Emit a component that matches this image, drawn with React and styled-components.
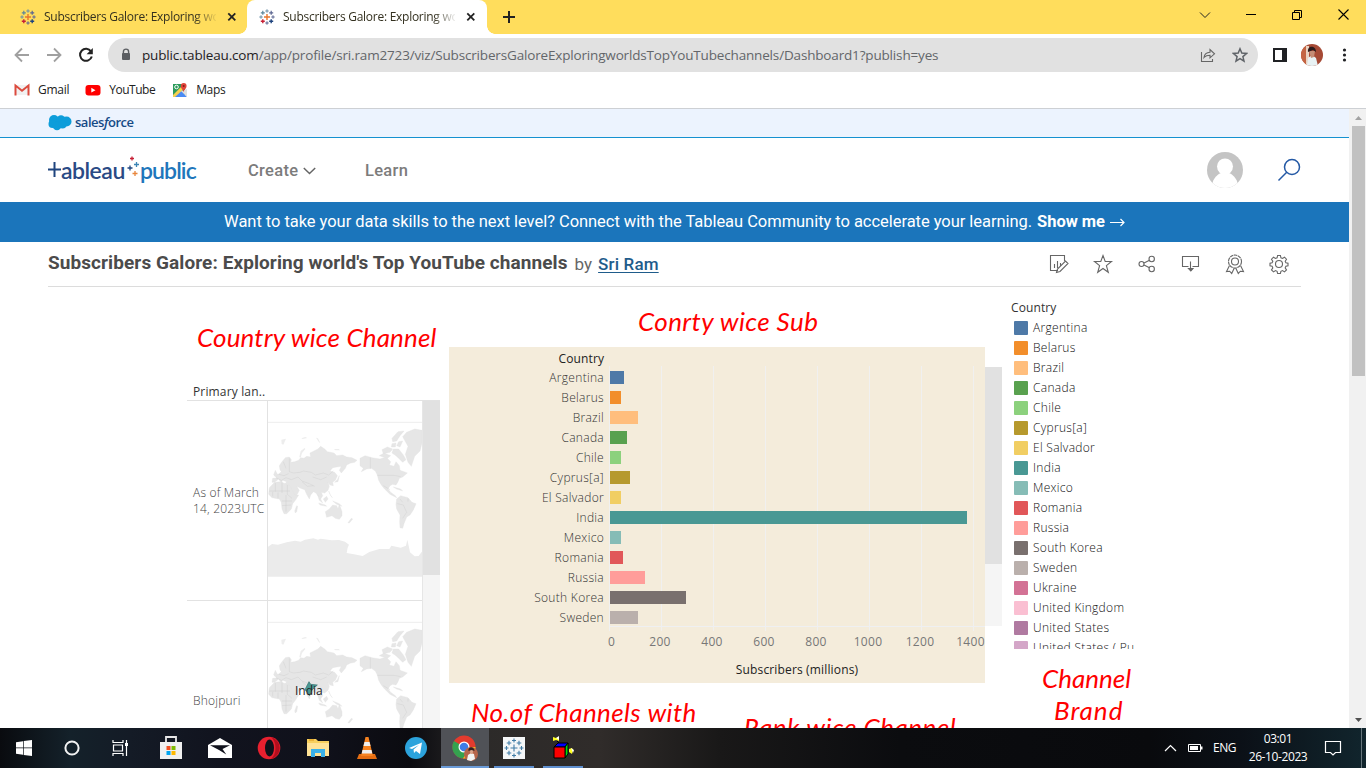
import React from "react";
import styled, { createGlobalStyle } from "styled-components";

const Global = createGlobalStyle`
  * { box-sizing: border-box; }
  body { margin: 0; background: #fff; overflow: hidden; font-family: "Open Sans", "Noto Sans", sans-serif; }
  svg { display: block; flex: none; }
`;

const ui = `"Open Sans", "Noto Sans", sans-serif`;
const site = `Roboto, "Liberation Sans", sans-serif`;
const hand = `Lato, "Open Sans", cursive`;

const Screen = styled.div`
  width: 1366px; height: 768px; display: flex; flex-direction: column; overflow: hidden; background: #fff;
`;

/* Browser frame */
const TabStrip = styled.div`
  height: 34px; background: #ffdd5c; display: flex; align-items: stretch; flex: none;
`;
const Tab = styled.div`
  width: ${p => p.$w}px; padding-left: ${p => p.$pad}px; display: flex; align-items: center; position: relative;
  background: ${p => (p.$active ? "#fff" : "transparent")};
  border-radius: 8px 8px 0 0;
  ${p => p.$active && `
    &::before, &::after { content: ""; position: absolute; bottom: 0; width: 8px; height: 8px; }
    &::before { left: -8px; background: radial-gradient(circle at 0 0, transparent 7.5px, #fff 8px); }
    &::after { right: -8px; background: radial-gradient(circle at 100% 0, transparent 7.5px, #fff 8px); }
  `}
`;
const TabTitle = styled.div`
  margin-left: 8px; width: 172px; font: 400 12px/18px ${ui}; letter-spacing: -0.27px; color: #33301f; white-space: nowrap; overflow: hidden;
  mask-image: linear-gradient(90deg, #000 150px, transparent 174px);
`;
const CloseMark = styled.div`
  margin-left: 11px; display: flex;
`;
const NewTab = styled.div`
  margin-left: 16px; display: flex; align-items: center;
`;
const WindowButtons = styled.div`
  margin-left: auto; display: flex; align-items: center; padding-bottom: 5px;
`;
const WinButton = styled.div`
  width: 46px; display: flex; justify-content: center;
`;
const Toolbar = styled.div`
  height: 42px; display: flex; align-items: center; padding: 0 12px 0 14px; flex: none;
`;
const NavIcons = styled.div`
  display: flex; gap: 16px; width: 94px; align-items: center; flex: none;
`;
const Address = styled.div`
  width: 1150px; flex: none; height: 34px; border-radius: 17px; background: #e1e1e1; display: flex; align-items: center; padding: 0 10px 0 12px;
`;
const Url = styled.div`
  margin-left: 10px; font: 400 13.5px/20px ${ui}; letter-spacing: -0.165px; color: #63666a; white-space: nowrap;
  b { font-weight: 400; color: #1f2023; }
`;
const AddressIcons = styled.div`
  margin-left: auto; display: flex; gap: 16px; align-items: center;
`;
const ToolbarEnd = styled.div`
  display: flex; align-items: center; margin-left: 15px; gap: 14px;
`;
const Bookmarks = styled.div`
  height: 33px; border-bottom: 1px solid #cdd0d4; display: flex; align-items: flex-start; padding: 5px 0 0 14px; flex: none;
`;
const Bookmark = styled.div`
  display: flex; align-items: center; gap: 8px; margin-right: ${p => p.$gap}px;
  font: 400 12px/18px ${ui}; letter-spacing: ${p => p.$ls}px; color: #222;
`;

/* Page */
const Viewport = styled.div`
  flex: 1; display: flex; min-height: 0;
`;
const Page = styled.main`
  width: 1349px; height: 619px; overflow: hidden; display: flex; flex-direction: column;
`;
const PageScroll = styled.div`
  width: 17px; background: #f1f1f1; display: flex; flex-direction: column; align-items: center; padding: 6px 0 5px 1px; gap: 5px;
`;
const PageThumb = styled.div`
  width: 13px; height: 250px; background: #c1c1c1; margin-bottom: auto;
`;
const SalesforceBar = styled.div`
  height: 29px; background: #ecf3fe; border-bottom: 1px solid #1591d0; display: flex; align-items: center; padding: 0 0 1px 48px; flex: none;
`;
const SalesforceName = styled.span`
  margin-left: 3px; margin-top: -2px; font: 600 13px/18px "Open Sans", sans-serif; letter-spacing: -0.47px; color: #164a86;
  i { font-style: italic; }
`;
const Header = styled.header`
  height: 64px; display: flex; align-items: center; padding: 0 48px; flex: none;
`;
const Logo = styled.div`
  width: 200px; display: flex; align-items: center;
`;
const LogoWord = styled.span`
  font: 600 23px/30px Lato, sans-serif; letter-spacing: ${p => p.$ls}px; color: ${p => p.$c}; width: ${p => p.$w}px; white-space: nowrap;
  margin-top: -1px;
`;
const NavLink = styled.a`
  width: 117px; display: flex; align-items: center; gap: 5px; padding-top: 1px;
  font: 500 16.5px/24px ${site}; letter-spacing: 0.3px; color: #7c7c7c;
`;
const HeaderEnd = styled.div`
  margin-left: auto; display: flex; align-items: center; gap: 34px;
`;
const Banner = styled.div`
  height: 40px; background: #1b75bb; color: #fff; display: flex; align-items: center; justify-content: center; gap: 5px; flex: none;
  font: 400 16.5px/24px ${site}; letter-spacing: -0.045px; padding-bottom: 1px; white-space: nowrap;
  b { font-weight: 700; }
`;
const TitleRow = styled.div`
  height: 45px; margin: 0 48px; border-bottom: 1px solid #dcdcdc; display: flex; align-items: center; flex: none;
`;
const VizTitle = styled.h1`
  margin: -2px 0 0; font: 700 19px/28px ${site}; letter-spacing: 0.08px; color: #4b4b4b; white-space: nowrap;
`;
const By = styled.span`
  margin: -1px 0 0 7px; font: 400 17px/28px ${site}; color: #666;
`;
const Author = styled.a`
  margin: -1px 0 0 6px; font: 500 17px/28px ${site}; letter-spacing: 0.15px; color: #1f5c8b; text-decoration: underline; text-underline-offset: 2px;
`;
const Actions = styled.div`
  margin-left: auto; margin-right: 11px; display: flex; gap: 22px; align-items: center;
`;

/* Dashboard */
const Dashboard = styled.div`
  flex: 1; min-height: 0; display: flex; padding-left: 187px;
`;
const HandTitle = styled.h2`
  margin: 0; font: italic 400 26px/32px ${hand}; color: #f00; letter-spacing: ${p => p.$ls || 0}px; white-space: nowrap;
`;
const MapColumn = styled.section`
  width: 253px; margin-right: 9px; padding-top: 34px; display: flex; flex-direction: column;
  & > ${HandTitle} { padding-left: 10px; }
`;
const FieldName = styled.div`
  margin-top: 30px; height: 18px; padding-left: 6px; font: 400 12px/18px ${ui}; letter-spacing: 0.15px; color: #333;
`;
const MapTable = styled.div`
  flex: 1; min-height: 0; display: flex; border-top: 1px solid #e2e2e2; margin-top: -1px;
`;
const MapRows = styled.div`
  width: 236px; border-right: 1px solid #e6e6e6; overflow: hidden;
`;
const MapRow = styled.div`
  display: flex; height: 200px; border-bottom: 1px solid #e2e2e2;
`;
const RowName = styled.div`
  width: 81px; border-right: 1px solid #e2e2e2; display: flex; align-items: center; padding-left: 6px;
  font: 300 12px/16px ${ui}; letter-spacing: 0.2px; color: #444; white-space: pre; overflow: hidden;
`;
const MapCell = styled.div`
  position: relative; width: 154px;
`;
const MarkLabel = styled.span`
  position: absolute; left: 27px; top: 82px; font: 400 12px/16px ${ui}; color: #222;
`;
const InnerScroll = styled.div`
  width: 17px; background: #f5f5f5; flex: none;
  &::before { content: ""; display: block; height: ${p => p.$thumb}px; background: #e1e1e1; }
`;
const ChartColumn = styled.section`
  width: 552px; margin-right: 10px; padding-top: 18px;
  & > ${HandTitle} { padding-left: 189px; }
`;
const ChartWrap = styled.div`
  display: flex; margin-top: 10px;
  & > ${InnerScroll} { margin-top: 20px; height: 259px; }
`;
const Chart = styled.div`
  width: 536px; height: 336px; background: #f4ecdb; padding-top: 3px;
`;
const ChartHead = styled.div`
  width: 155px; height: 16px; text-align: right; font: 400 12px/18px ${ui}; letter-spacing: 0.1px; color: #222;
`;
const ChartBody = styled.div`
  display: flex; height: 265px;
`;
const RowLabels = styled.div`
  width: 155px; margin-right: 5px; padding-top: 2px; text-align: right;
  font: 300 12px/20px ${ui}; letter-spacing: 0.3px; color: #333;
`;
const Plot = styled.div`
  width: 376px; padding: 5px 0 0 1px;
  background: linear-gradient(#eff0f2, #eff0f2) 0 260px / 100% 1px no-repeat,
    repeating-linear-gradient(90deg, #f0f0f0 0 1px, transparent 1px 52px);
`;
const Bar = styled.div`
  height: 13px; margin-bottom: 7px; width: ${p => p.$w}px; background: ${p => p.$c};
`;
const Axis = styled.div`
  display: flex; margin-left: 133px; margin-top: 1px; font: 400 12px/20px ${ui}; letter-spacing: 0.3px; color: #777;
  span { width: 52px; flex: none; text-align: center; }
  span:first-child { padding-left: 7px; }
  span:last-child { width: 49px; }
`;
const AxisTitle = styled.div`
  margin: 9px 0 0 160px; text-align: center; font: 400 12px/18px ${ui}; letter-spacing: 0.15px; color: #222;
`;
const LowerTitles = styled.div`
  display: flex; padding-left: 22px;
  & > ${HandTitle} { margin-top: 13px; width: 274px; }
  & > ${HandTitle} + ${HandTitle} { margin-top: 28px; padding-left: 8px; }
`;
const LegendColumn = styled.aside`
  width: 130px; padding-top: 12px; overflow: hidden;
`;
const Legend = styled.div`
  height: 350px; overflow: hidden;
`;
const LegendHead = styled.div`
  height: 19px; font: 400 12px/18px ${ui}; letter-spacing: 0.1px; color: #333;
`;
const LegendItem = styled.div`
  height: 20px; display: flex; align-items: center; gap: 5px; padding-left: 3px;
  font: 300 12px/20px ${ui}; letter-spacing: 0.3px; color: #111; white-space: nowrap; width: 125px; overflow: hidden;
`;
const Swatch = styled.span`
  width: 14px; height: 14px; flex: none; background: ${p => p.$c}; border-radius: 1px;
`;
const BrandTitle = styled.div`
  padding: 13px 0 0 31px;
  ${HandTitle} + ${HandTitle} { padding-left: 12px; }
`;

/* Taskbar */
const Taskbar = styled.footer`
  height: 40px; flex: none; display: flex;
  background: linear-gradient(90deg, #090b0f 0, #14212a 70px, #141b26 130px, #11131e 220px, #10111b 320px, #0b0b10 410px, #2c2a29 480px, #302c2a 600px, #191818 720px, #0b0c0f 900px, #090a0d 1150px, #0b1017 1240px, #11252d 1366px);
`;
const Slot = styled.div`
  width: 48px; height: 40px; margin-left: ${p => p.$ml || 0}px; display: flex; align-items: center; justify-content: center;
  background: ${p => (p.$active ? "#505257" : "transparent")};
  box-shadow: ${p => (p.$active ? "inset 0 -2px #6a9bd8" : "none")};
`;
const OpenSlot = styled(Slot)`
  background: linear-gradient(#5f8fce, #5f8fce) 50% 100% / 40px 2px no-repeat;
`;
const Tray = styled.div`
  margin-left: auto; display: flex; align-items: center; color: #fff; font: 400 12px/18px ${ui};
`;
const Lang = styled.span`
  margin-left: 10px; width: 35px; letter-spacing: -0.5px;
`;
const Clock = styled.div`
  width: 60px; text-align: center; line-height: 18px; letter-spacing: -0.4px; white-space: nowrap;
`;
const PeekEdge = styled.div`
  width: 5px; height: 40px; border-left: 1px solid #66757b; margin-left: 19px;
`;

const plus = (x, y, r) => `M${x - r} ${y}H${x + r}M${x} ${y - r}V${y + r}`;

function TableauMark() {
  const parts = [
    [8, 8, 3, "#e8762c", 1.4], [8, 2, 1.7, "#6b8fa6"], [8, 14, 1.7, "#5b6591"],
    [2, 8, 1.7, "#6b8fa6"], [14, 8, 1.7, "#5c6692"],
    [3.8, 3.8, 2, "#5b879b", 1.2], [12.2, 3.8, 2, "#5b6591", 1.2],
    [3.8, 12.2, 2, "#c72035", 1.4], [12.2, 12.2, 2, "#1f447e", 1.4],
  ];
  return (
    <svg width="16" height="16" viewBox="0 0 16 16">
      {parts.map(([x, y, r, c, w], i) => (
        <path key={i} d={plus(x, y, r)} stroke={c} strokeWidth={w || 1} />
      ))}
    </svg>
  );
}

const Close = () => (
  <svg width="10" height="10" viewBox="0 0 10 10"><path d="M1.3 1.3l7 7M8.3 1.3l-7 7" stroke="#222" strokeWidth="1.8" /></svg>
);

const countries = [
  ["Argentina", "#4e79a7", 14], ["Belarus", "#f28e2b", 11], ["Brazil", "#ffbe7d", 28], ["Canada", "#59a14f", 17],
  ["Chile", "#8cd17d", 11], ["Cyprus[a]", "#b6992d", 20], ["El Salvador", "#f1ce63", 11], ["India", "#499894", 357],
  ["Mexico", "#86bcb6", 11], ["Romania", "#e15759", 13], ["Russia", "#ff9d9a", 35], ["South Korea", "#79706e", 76],
  ["Sweden", "#bab0ac", 28],
];
const legendOnly = [
  ["Ukraine", "#d37295"], ["United Kingdom", "#fabfd2"], ["United States", "#b07aa1"], ["United States ( Pu..", "#d4a6c8"],
];

function WorldMap({ mark }) {
  return (
    <svg width="154" height="199" viewBox="264 318 462 597">
      <path d="M264 382H726" stroke="#ededed" strokeWidth="3" />
      <g fill="#e6e6e6" stroke="#e0e0e0" strokeWidth="1">
        <path d="M276 562L278 550 290 549 284 540 296 537 304 530 300 524 298 512 306 500 316 488 328 486 334 494 332 502 344 500 356 496 362 488 372 490 380 484 392 486 390 474 402 468 414 462 422 454 434 462 442 470 462 474 470 482 488 480 500 486 516 488 531 496 524 502 512 504 500 510 496 520 484 534 478 526 484 514 470 516 458 518 450 528 464 532 472 542 466 556 458 562 460 572 450 570 444 562 448 574 444 586 434 594 424 592 428 602 422 612 414 602 408 594 400 590 392 600 388 612 380 598 374 584 362 580 350 574 358 586 352 598 340 606 332 590 326 576 314 568 320 560 308 556 304 564 296 552 284 562z" />
        <path d="M268 578L284 562 302 560 320 568 330 572 338 588 344 600 356 600 346 616 338 626 334 642 320 656 312 656 306 642 304 622 298 612 276 608 266 598z" />
        <path d="M344 648L350 632 353 634 350 650 346 654z" />
        <path d="M436 650L448 642 458 630 470 632 474 642 478 628 486 650 486 662 478 673 466 670 456 662 440 667z" />
        <path d="M412 598L424 616 428 624 418 616zM430 612L440 604 444 612 436 622zM458 618L478 626 486 634 470 628zM416 624L436 630 440 634 420 630zM446 588L452 602 457 608 449 596zM464 562L472 554 478 542 474 560zM504 683L514 670 518 672 508 684zM281 540L286 526 293 540 286 545z" />
        <path d="M540 490L555 482 576 488 600 492 618 486 632 500 628 510 642 514 648 500 658 512 660 526 672 530 682 534 668 546 658 550 654 560 648 570 638 568 630 572 624 582 632 592 646 602 650 608 630 598 614 582 604 570 596 556 592 540 586 528 574 520 560 522 544 530 550 520 540 512z" />
        <path d="M668 425L680 412 704 402 726 406V444L720 468 704 484 694 514 684 502 676 478 684 454z" />
        <path d="M636 430L654 410 672 408 660 422 650 438 638 440zM606 464L622 456 638 462 630 472 610 476zM598 482L612 474 632 482 622 490zM640 462L656 462 670 480 678 494 668 502 658 492 648 482 636 474zM656 440L668 438 660 456 650 452zM636 446L648 444 646 456 634 456zM640 576L662 582 668 588 650 582z" />
        <path d="M650 612L662 602 684 608 696 622 708 626 700 645 690 660 680 666 672 686 668 700 660 698 659 680 660 660 650 642 648 628z" />
      </g>
      <path d="M358 486L362 468 374 459 376 462 366 474 362 488zM304 434L318 431 310 449 305 447zM408 428L414 430 421 444 417 442zM462 462H476L480 466H466zM364 430L376 426 382 429 368 432z" fill="#ededed" />
      <g fill="none" stroke="#c9c9c9" strokeWidth="1.1">
        <path d="M328 490V530L340 534 360 532 370 528 394 532 406 540 430 534 446 540 460 528M398 546L422 554 440 546M288 548L304 556 318 548 334 554 354 546 366 558 388 566 404 574M366 560L382 574 400 572M310 500L318 520M296 538L312 542 326 536" />
        <path d="M268 588H330M286 564V590M306 562V594M322 570V598L336 610M278 590V604M294 592V610M306 618H336M318 600V650M306 632L334 630" />
        <path d="M571 487V521M592 541H642L662 545M610 572L630 584M652 626L670 630 680 652 668 670M684 610V620M660 612L668 622" />
      </g>
      <path d="M264 755l12-8 18 2 26-7 25-5 17 3 13-6 25-4 14 4 8-3 33 5 22-1 18 5 12 9-4 9-3 16 22 4 26 5 20-12 30-9 30 0 6-10 28 6 16-6 4-18 4 18 4 20 14 12 12-1 16-22V845H264z" fill="#ebebeb" />
      {mark && <path d="M376 582l6-12 5-10 5 8 20 2-10 9-6 6-8 17-6-12-6-4z" fill="#499894" stroke="#33706d" strokeWidth="2" />}
    </svg>
  );
}

const line = { fill: "none", stroke: "#666", strokeWidth: 1.1 };

function App() {
  return (
    <Screen>
      <Global />
      <TabStrip>
        <Tab $w={247} $pad={20}><TableauMark /><TabTitle>Subscribers Galore: Exploring world's</TabTitle><CloseMark><Close /></CloseMark></Tab>
        <Tab $w={240} $pad={12} $active><TableauMark /><TabTitle>Subscribers Galore: Exploring world's</TabTitle><CloseMark><Close /></CloseMark></Tab>
        <NewTab><svg width="12" height="12" viewBox="0 0 12 12"><path d="M6 0v12M0 6h12" stroke="#222" strokeWidth="2" /></svg></NewTab>
        <WindowButtons>
          <WinButton><svg width="12" height="8" viewBox="0 0 12 8"><path d="M1 1.5l5 5 5-5" fill="none" stroke="#222" /></svg></WinButton>
          <WinButton><svg width="10" height="2" viewBox="0 0 10 2"><path d="M0 .5h10" stroke="#000" /></svg></WinButton>
          <WinButton><svg width="10" height="10" viewBox="0 0 10 10"><path d="M.5 2.5h7v7h-7zM2.5 2.5v-2h7v7h-2" fill="none" stroke="#000" /></svg></WinButton>
          <WinButton><svg width="11" height="11" viewBox="0 0 11 11"><path d="M.5.5l10 10M10.5.5l-10 10" stroke="#000" strokeWidth="1.1" /></svg></WinButton>
        </WindowButtons>
      </TabStrip>
      <Toolbar>
        <NavIcons>
          <svg width="16" height="16" viewBox="0 0 16 16"><path d="M15 8H2M8 1.5L1.5 8 8 14.5" fill="none" stroke="#a0a0a0" strokeWidth="1.8" /></svg>
          <svg width="16" height="16" viewBox="0 0 16 16"><path d="M1 8h13M8 1.5L14.5 8 8 14.5" fill="none" stroke="#a0a0a0" strokeWidth="1.8" /></svg>
          <svg width="16" height="16" viewBox="0 0 16 16"><path d="M13 4.4A6 6 0 1 0 13.8 9.5" fill="none" stroke="#222" strokeWidth="2" /><path d="M14.8 1v6.2H8.6z" fill="#222" /></svg>
        </NavIcons>
        <Address>
          <svg width="12" height="14" viewBox="0 0 12 14"><path d="M3.4 6V3.7a2.6 2.6 0 0 1 5.2 0V6" fill="none" stroke="#5b5e62" strokeWidth="1.4" /><rect x="2" y="5" width="8" height="7" rx="1" fill="#5b5e62" /></svg>
          <Url><b>public.tableau.com</b>/app/profile/sri.ram2723/viz/SubscribersGaloreExploringworldsTopYouTubechannels/Dashboard1?publish=yes</Url>
          <AddressIcons>
            <svg width="16" height="15" viewBox="0 0 16 15"><path d="M1.5 4v9.5h11V11M4 9.5C4.500 6 7 4.500 10 4.300V1.500L14.500 5.800 10 9.800V7.200C7.500 7.200 5.500 7.800 4 9.500z" fill="none" stroke="#666" strokeWidth="1.1" /></svg>
            <svg width="16" height="16" viewBox="0 0 16 16"><path d="M8 1.800l1.800 4.300 4.700.4-3.600 3.100 1.100 4.600L8 11.700l-4 2.500 1.100-4.600L1.500 6.500l4.700-.4z" fill="none" stroke="#5f6368" strokeWidth="1.5" /></svg>
          </AddressIcons>
        </Address>
        <ToolbarEnd>
          <svg width="14" height="14" viewBox="0 0 14 14"><path d="M1 1h12v12H1z" fill="none" stroke="#202124" strokeWidth="2" /><path d="M9 1h4v12H9z" fill="#202124" /></svg>
          <svg width="22" height="22" viewBox="0 0 22 22">
            <clipPath id="face"><circle cx="11" cy="11" r="11" /></clipPath>
            <g clipPath="url(#face)"><path d="M0 0h22v22H0z" fill="#a64a35" /><path d="M0 0h5v22H0z" fill="#c46543" /><path d="M5 2h3v20H5z" fill="#ead3c2" /><path d="M6 22l1-8 4-3 4 3 2 8z" fill="#e8f2f4" /><path d="M8 7h6l-1 6-3 1z" fill="#c58d76" /><path d="M7 8C6 1 15 1 15 8L12 6z" fill="#2b1b1c" /></g>
          </svg>
          <svg width="16" height="16" viewBox="0 0 16 16"><g fill="#202124"><circle cx="7.500" cy="3" r="1.600" /><circle cx="7.500" cy="8" r="1.600" /><circle cx="7.500" cy="13" r="1.600" /></g></svg>
        </ToolbarEnd>
      </Toolbar>
      <Bookmarks>
        <Bookmark $gap={16} $ls={-0.25}>
          <svg width="16" height="16" viewBox="0 0 16 16"><path d="M1 3h14v10H1z" fill="#f1f1f1" /><path d="M1.500 13.500V3.500L8 8.800l6.500-5.300v10" fill="none" stroke="#dc4b3e" strokeWidth="2" /></svg>Gmail
        </Bookmark>
        <Bookmark $gap={17} $ls={-0.5}>
          <svg width="16" height="16" viewBox="0 0 16 16"><rect x=".5" y="3" width="15" height="10.500" rx="3" fill="#f00" /><path d="M6.300 5.800v4.800l4.200-2.400z" fill="#fff" /></svg>YouTube
        </Bookmark>
        <Bookmark $gap={0} $ls={-0.35}>
          <svg width="16" height="16" viewBox="0 0 16 16"><path d="M1 2h12v12H1z" fill="#2b9b5b" /><path d="M2 15l7-7 6 7z" fill="#4a8af4" /><path d="M1 13L11 3l3 2L3 15H1z" fill="#f5d04e" /><path d="M9 9l6 6V7z" fill="#dedede" /><circle cx="4.500" cy="5" r="1.800" fill="none" stroke="#fff" /><path d="M11.500 10C11 7.500 8.800 6.500 8.800 4a2.900 2.900 0 0 1 5.800 0c0 2.500-2.500 3.500-3.100 6z" fill="#e0443a" /><circle cx="11.700" cy="4" r="1" fill="#7d1f18" /></svg>Maps
        </Bookmark>
      </Bookmarks>

      <Viewport>
        <Page>
          <SalesforceBar>
            <svg width="24" height="17" viewBox="0 0 24 17"><g fill="#0d9dda"><circle cx="6" cy="6" r="5" /><circle cx="13" cy="5.500" r="4.300" /><circle cx="18.500" cy="7.500" r="5" /><circle cx="4.500" cy="10" r="4" /><circle cx="9" cy="12" r="4.300" /><circle cx="14.500" cy="10.500" r="4" /></g></svg>
            <SalesforceName>sales<i>f</i>orce</SalesforceName>
          </SalesforceBar>
          <Header>
            <Logo aria-label="Tableau Public">
              <svg width="13" height="16" viewBox="0 0 13 16"><path d="M0 7.500h13M6.500 0v15" stroke="#1f447e" strokeWidth="2" /></svg>
              <LogoWord $c="#2a4a85" $w={65} $ls={-0.5}>ableau</LogoWord>
              <svg width="14" height="28" viewBox="0 0 14 28"><g strokeWidth="1.300"><path d={plus(6, 2.500, 2)} stroke="#c72035" /><path d={plus(10.500, 8.500, 2.500)} stroke="#3c85b5" /><path d={plus(4, 12, 2.500)} stroke="#1f447e" /><path d={plus(9, 17.500, 2.500)} stroke="#e8863c" /></g></svg>
              <LogoWord $c="#2076bb" $w={60} $ls={-0.9}>public</LogoWord>
            </Logo>
            <NavLink>Create<svg width="13" height="8" viewBox="0 0 13 8"><path d="M.8 1l5.700 5.500L12.200 1" fill="none" stroke="#666" strokeWidth="1.500" /></svg></NavLink>
            <NavLink>Learn</NavLink>
            <HeaderEnd>
              <svg width="36" height="36" viewBox="0 0 36 36"><clipPath id="disc"><circle cx="18" cy="18" r="18" /></clipPath><g clipPath="url(#disc)"><path d="M0 0h36v36H0z" fill="#c4c4c4" /><circle cx="18" cy="14.500" r="8" fill="#fff" /><path d="M5 33c1-7 6-11 9-12h8c3 1 8 5 9 12v4H5z" fill="#fff" /></g></svg>
              <svg width="24" height="24" viewBox="0 0 24 24"><circle cx="15" cy="9" r="7.500" fill="none" stroke="#2459a5" strokeWidth="1.500" /><path d="M9.700 14.300L1.500 22.500" stroke="#2459a5" strokeWidth="1.500" /></svg>
            </HeaderEnd>
          </Header>
          <Banner>
            <span>Want to take your data skills to the next level? Connect with the Tableau Community to accelerate your learning.</span>
            <b>Show me</b>
            <svg width="15" height="10" viewBox="0 0 15 10"><path d="M0 5.500h14M10.500 2L14 5.500 10.500 9" fill="none" stroke="#fff" strokeWidth="1.200" /></svg>
          </Banner>
          <TitleRow>
            <VizTitle>Subscribers Galore: Exploring world's Top YouTube channels</VizTitle>
            <By>by</By><Author>Sri Ram</Author>
            <Actions>
              <svg width="22" height="22" viewBox="0 0 22 22" {...line}><path d="M10 17.500H2.500v-15h14V8M6.500 11v4M9.500 8v7M12.500 10v3M8.500 19.500l1-3.500 8-8 2.500 2.500-8 8z" /></svg>
              <svg width="22" height="22" viewBox="0 0 22 22" {...line}><path d="M11 2.500l2.200 6h6.300l-5.100 4.100 1.900 6.700L11 15.500l-5.300 3.800 1.900-6.700L2.500 8.500h6.300z" /></svg>
              <svg width="22" height="22" viewBox="0 0 22 22" {...line}><circle cx="5.500" cy="11" r="2.500" /><circle cx="15.700" cy="6" r="2.700" /><circle cx="15.700" cy="16" r="2.700" /><path d="M8 10l5.500-2.800M8 12l5.500 2.800" /></svg>
              <svg width="22" height="22" viewBox="0 0 22 22" {...line}><path d="M8.500 13.500h-6v-10h16v10h-6M10.500 8.500V17" /><path d="M8.500 15.500h4.500L10.800 18z" fill="#666" /></svg>
              <svg width="22" height="22" viewBox="0 0 22 22" {...line}><circle cx="11" cy="8.500" r="6.500" strokeDasharray="3.500 .6" /><circle cx="11" cy="8.500" r="3.500" /><path d="M5.500 12.500l-3 6 3.200-.3 2 2.300L10.300 15M16.500 12.500l3 6-3.200-.3-2 2.300L11.700 15" /></svg>
              <svg width="22" height="22" viewBox="0 0 22 22" {...line}><circle cx="11" cy="11" r="3.500" /><path d="M9.600 2.500h2.800l.5 2.300 1.600.7 2-1.300 2 2-1.300 2 .7 1.600 2.100.4v2.600l-2.100.5-.7 1.600 1.300 2-2 2-2-1.300-1.600.7-.5 2.200H9.600l-.5-2.200-1.600-.7-2 1.300-2-2 1.300-2-.7-1.600-2.100-.5v-2.600l2.100-.4.7-1.600-1.300-2 2-2 2 1.300 1.600-.7z" /></svg>
            </Actions>
          </TitleRow>
          <Dashboard>
            <MapColumn>
              <HandTitle $ls={0.15}>Country wice Channel</HandTitle>
              <FieldName>Primary lan..</FieldName>
              <MapTable>
                <MapRows>
                  <MapRow><RowName>{"As of March\n14, 2023UTC"}</RowName><MapCell><WorldMap /></MapCell></MapRow>
                  <MapRow><RowName>Bhojpuri</RowName><MapCell><WorldMap mark /><MarkLabel>India</MarkLabel></MapCell></MapRow>
                </MapRows>
                <InnerScroll $thumb={174} />
              </MapTable>
            </MapColumn>
            <ChartColumn>
              <HandTitle $ls={0.4}>Conrty wice Sub</HandTitle>
              <ChartWrap>
                <Chart>
                  <ChartHead>Country</ChartHead>
                  <ChartBody>
                    <RowLabels>{countries.map(([n]) => <div key={n}>{n}</div>)}</RowLabels>
                    <Plot>{countries.map(([n, c, w]) => <Bar key={n} $c={c} $w={w} />)}</Plot>
                  </ChartBody>
                  <Axis>{[0, 200, 400, 600, 800, 1000, 1200, 1400].map(v => <span key={v}>{v}</span>)}</Axis>
                  <AxisTitle>Subscribers (millions)</AxisTitle>
                </Chart>
                <InnerScroll $thumb={197} />
              </ChartWrap>
              <LowerTitles>
                <HandTitle $ls={0.4}>No.of Channels with</HandTitle>
                <HandTitle $ls={0.5}>Rank wice Channel</HandTitle>
              </LowerTitles>
            </ChartColumn>
            <LegendColumn>
              <Legend>
                <LegendHead>Country</LegendHead>
                {[...countries, ...legendOnly].map(([n, c]) => <LegendItem key={n}><Swatch $c={c} />{n}</LegendItem>)}
              </Legend>
              <BrandTitle><HandTitle>Channel</HandTitle><HandTitle $ls={1}>Brand</HandTitle></BrandTitle>
            </LegendColumn>
          </Dashboard>
        </Page>
        <PageScroll>
          <svg width="9" height="6" viewBox="0 0 9 6"><path d="M4.500 1L8 5H1z" fill="#a3a3a3" /></svg>
          <PageThumb />
          <svg width="9" height="6" viewBox="0 0 9 6"><path d="M4.500 5L8 1H1z" fill="#505050" /></svg>
        </PageScroll>
      </Viewport>

      <Taskbar>
        <Slot><svg width="16" height="16" viewBox="0 0 16 16"><path d="M0 2.200l7-1v6.400H0zM7.700 1.100L16 0v7.600H7.700zM0 8.300h7v6.500l-7-1zM7.700 8.300H16V16l-8.300-1.100z" fill="#fff" /></svg></Slot>
        <Slot><svg width="16" height="16" viewBox="0 0 16 16"><circle cx="8" cy="8" r="6.600" fill="none" stroke="#f2f2f2" strokeWidth="2" /></svg></Slot>
        <Slot><svg width="17" height="18" viewBox="0 0 17 18"><path d="M1 1v2.500h10V1M1 17v-2.500h10V17M1.500 6h9v6h-9zM14.500 1v16" fill="none" stroke="#fff" strokeWidth="1.200" /><path d="M13 4h3v3h-3z" fill="#fff" /></svg></Slot>
        <Slot $ml={3}><svg width="24" height="26" viewBox="0 0 24 26"><path d="M7 8V2h10v6" fill="none" stroke="#e8e8e8" strokeWidth="1.800" /><path d="M1 7h22v17H1z" fill="#f0f0f0" /><path d="M7.500 11h4v4h-4z" fill="#f25022" /><path d="M12.500 11h4v4h-4z" fill="#7fba00" /><path d="M7.500 16h4v4h-4z" fill="#00a4ef" /><path d="M12.500 16h4v4h-4z" fill="#ffb900" /></svg></Slot>
        <Slot $ml={1}><svg width="24" height="20" viewBox="0 0 24 20"><path d="M0 7L12 0l12 7v13H0z" fill="#fff" /><path d="M2 7.200h20L14.500 11l3.800 5.500L11 12z" fill="#11131d" /></svg></Slot>
        <Slot $ml={1}><svg width="24" height="24" viewBox="0 0 24 24"><circle cx="12" cy="12" r="11.300" fill="#e8202f" /><path d="M14 1a11.300 11.300 0 0 1 0 22c6-5 6-17 0-22z" fill="#b40e1d" /><ellipse cx="12.500" cy="12" rx="4.500" ry="8.500" fill="#10111a" /></svg></Slot>
        <Slot $ml={1}><svg width="22" height="20" viewBox="0 0 22 20"><path d="M0 1h9l2 2h11v15H0z" fill="#f7cf5e" /><path d="M0 5h22v13H0z" fill="#ffe296" /><path d="M4 19v-8h14v8h-4v-4H8v4z" fill="#3ab0e8" /><path d="M2 2h5" stroke="#e7a92c" strokeWidth="1.500" /></svg></Slot>
        <Slot $ml={1}><svg width="22" height="24" viewBox="0 0 22 24"><path d="M3 18h16l2 5H1z" fill="#e46d12" /><path d="M9.500 1h3l4.500 19H5z" fill="#f58220" /><path d="M8.500 6h5l1 4H7.500zM6.500 14h9l.8 3.500H5.700z" fill="#eee" /></svg></Slot>
        <Slot $ml={1}><svg width="22" height="22" viewBox="0 0 22 22"><circle cx="11" cy="11" r="11" fill="#2ca3dc" /><path d="M4 11l13-5.500L15 17l-4-3-2 2-.5-3.500L14 8l-7 4z" fill="#fff" /></svg></Slot>
        <Slot $ml={1} $active>
          <svg width="26" height="26" viewBox="0 0 26 26">
            <circle cx="12" cy="12" r="11.500" fill="#e33b2e" /><path d="M12 12L2 6a11.500 11.500 0 0 0 9 17.500L17 15z" fill="#34a24f" /><path d="M12 12h11.500A11.500 11.500 0 0 1 11 23.500L17 14z" fill="#fbc116" /><path d="M12 1a11 11 0 0 1 10 6H12z" fill="#e33b2e" />
            <circle cx="12" cy="12" r="5.500" fill="#fff" /><circle cx="12" cy="12" r="4.300" fill="#3f7de8" />
            <circle cx="19" cy="19" r="7" fill="#b5654a" /><path d="M15 25l1-5 3-2 3 1 1 5-4 2z" fill="#f1f4f4" /><path d="M17.500 14h4l-1 5h-2z" fill="#dba58c" /><path d="M16.500 16c-1-5 6-5 6 0l-3-1z" fill="#35211f" />
          </svg>
        </Slot>
        <OpenSlot $ml={1}><svg width="22" height="22" viewBox="0 0 22 22"><path d="M0 0h22v22H0z" fill="#f5f7f8" /><path d={[plus(11, 11, 3.500), plus(11, 3.500, 2), plus(11, 18.500, 2), plus(3.500, 11, 2), plus(18.500, 11, 2), plus(6, 6, 2.300), plus(16, 6, 2.300), plus(6, 16, 2.300), plus(16, 16, 2.300)].join("")} stroke="#417da6" strokeWidth="1.100" /></svg></OpenSlot>
        <OpenSlot $ml={1}><svg width="24" height="24" viewBox="0 0 24 24"><path d="M3 11l4-4h10l-3 4z" fill="#00f" stroke="#000" /><path d="M14 11l3-4v11l-3 4z" fill="#0d1" stroke="#000" /><path d="M3 11h11v11H3z" fill="#f00" stroke="#000" /><path d="M2 1l3 1 3-1v4l-3-1-3 1zM18 13l3-1 1 2-1 4-3-2z" fill="#ff2" /><path d="M5 2l3-2v4zM20 12l3 2-1 3z" fill="#fff" /><path d="M6 5l2 2" stroke="#000" /></svg></OpenSlot>
        <Tray>
          <svg width="13" height="8" viewBox="0 0 13 8"><path d="M1 7l5.500-5.500L12 7" fill="none" stroke="#fff" strokeWidth="1.200" /></svg>
          <svg width="26" height="10" viewBox="0 0 26 10"><path d="M11.500 1.500h12v7h-12z" fill="none" stroke="#fff" /><path d="M13 3h8v4h-8zM24 3.500h1.500v3H24z" fill="#fff" /></svg>
          <Lang>ENG</Lang>
          <Clock>03:01<br />26-10-2023</Clock>
          <svg width="34" height="18" viewBox="0 0 34 18"><path d="M17.500 2.500h15v11h-5l-2.500 2.500-2.500-2.500h-5z" fill="none" stroke="#fff" strokeWidth="1.200" /></svg>
          <PeekEdge />
        </Tray>
      </Taskbar>
    </Screen>
  );
}

export default App;
